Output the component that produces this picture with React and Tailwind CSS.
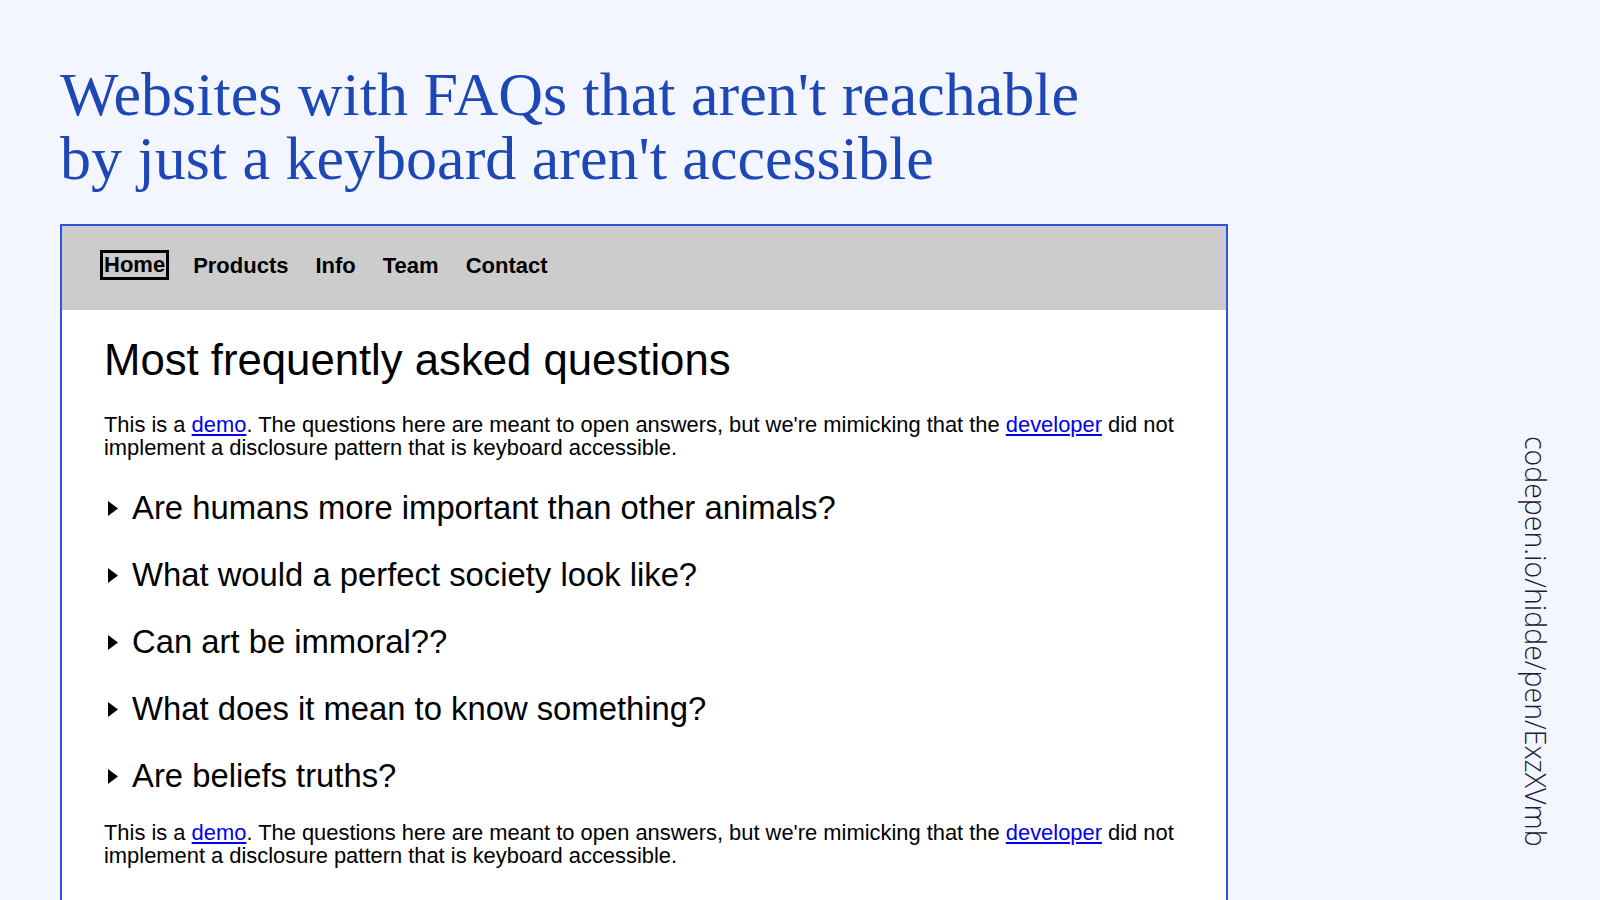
const questions = [
  "Are humans more important than other animals?",
  "What would a perfect society look like?",
  "Can art be immoral??",
  "What does it mean to know something?",
  "Are beliefs truths?",
];

function Intro() {
  return (
    <p className="text-[21.9px] leading-[23px] text-black">
      This is a{" "}
      <a href="#" className="text-[#0000ee] underline">
        demo
      </a>
      . The questions here are meant to open answers, but we're mimicking that the{" "}
      <a href="#" className="text-[#0000ee] underline">
        developer
      </a>{" "}
      did not implement a disclosure pattern that is keyboard accessible.
    </p>
  );
}

export default function App() {
  return (
    <div className="flex h-[900px] w-[1600px] overflow-hidden bg-[#f3f6fe]">
      <div className="flex w-[1228px] flex-col pl-[60px]">
        <h1
          className="mt-[62px] text-[62px] leading-[64px] text-[#1c47b5]"
          style={{ fontFamily: '"Liberation Serif", "DejaVu Serif", serif' }}
        >
          Websites with FAQs that aren't reachable
          <br />
          by just a keyboard aren't accessible
        </h1>

        <div
          className="mt-[34px] flex flex-1 flex-col border-2 border-b-0 border-[#2f55d4] bg-white"
          style={{ fontFamily: '"Liberation Sans", Arial, sans-serif' }}
        >
          <nav className="flex h-[84px] shrink-0 items-center gap-[27px] bg-[#cccccc] pb-[6px] pl-[41px] text-[22px] font-bold text-black">
            <a href="#" className="px-[1px] leading-[24px] outline outline-[3px] outline-black">
              Home
            </a>
            <a href="#">Products</a>
            <a href="#">Info</a>
            <a href="#">Team</a>
            <a href="#">Contact</a>
          </nav>

          <main className="px-[42px] pt-[25px]">
            <h2 className="text-[43.7px] leading-[50px] text-black">Most frequently asked questions</h2>
            <div className="mt-[28px]">
              <Intro />
            </div>
            <ul className="mt-[29px] flex flex-col gap-[27px]">
              {questions.map((q) => (
                <li key={q} className="flex items-center gap-[14px] pl-[4px] text-[32.8px] leading-[40px] text-black">
                  <svg width="10" height="15" viewBox="0 0 10 15" className="shrink-0">
                    <path d="M0 0 L10 7.5 L0 15 Z" fill="black" />
                  </svg>
                  <span>{q}</span>
                </li>
              ))}
            </ul>
            <div className="mt-[25px]">
              <Intro />
            </div>
          </main>
        </div>
      </div>

      <div className="flex flex-1 items-center justify-end pr-[43px] pt-[382px]">
        <span
          className="text-[28.5px] font-light text-[#1c1c3a]"
          style={{ writingMode: "vertical-rl", fontFamily: '"Open Sans", Inter, sans-serif' }}
        >
          codepen.io/hidde/pen/ExzXVmb
        </span>
      </div>
    </div>
  );
}
